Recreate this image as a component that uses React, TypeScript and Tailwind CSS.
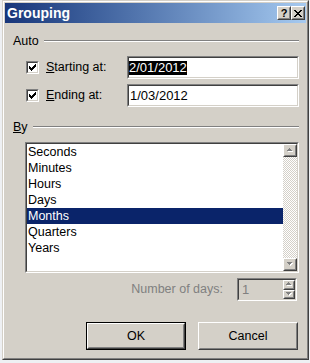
import React from "react"

const ITEMS = ["Seconds", "Minutes", "Hours", "Days", "Months", "Quarters", "Years"]

function Sunken({ className = "", inner = "bg-white", children }: { className?: string; inner?: string; children?: React.ReactNode }) {
  return (
    <div className={`border border-t-[#808080] border-l-[#808080] border-r-white border-b-white ${className}`}>
      <div className={`w-full h-full border border-t-[#404040] border-l-[#404040] border-r-[#d4d0c8] border-b-[#d4d0c8] ${inner}`}>
        {children}
      </div>
    </div>
  )
}

function Raised({ className = "", children }: { className?: string; children?: React.ReactNode }) {
  return (
    <div className={`bg-[#d4d0c8] border border-t-white border-l-white border-r-[#404040] border-b-[#404040] ${className}`}>
      <div className="w-full h-full border border-t-[#d4d0c8] border-l-[#d4d0c8] border-r-[#808080] border-b-[#808080] flex items-center justify-center">
        {children}
      </div>
    </div>
  )
}

function Check() {
  return (
    <Sunken className="w-[13px] h-[13px]">
      <div className="w-full h-full flex items-center justify-center">
        <svg width="7" height="7" viewBox="0 0 7 7" shapeRendering="crispEdges">
          <path d="M6 0h1v1h-1zM5 1h2v1h-2zM0 2h1v1h-1zM4 2h3v1h-3zM0 3h2v1h-2zM3 3h3v1h-3zM0 4h5v1h-5zM1 5h3v1h-3zM2 6h1v1h-1z" fill="#000" />
        </svg>
      </div>
    </Sunken>
  )
}

// greyed arrow, disabled look
function Arrow({ up }: { up?: boolean }) {
  return (
    <svg width="8" height="5" viewBox="0 0 8 5" shapeRendering="crispEdges">
      {up ? (
        <>
          <path d="M4 1h1v1h-1zM3 2h3v1h-3zM2 3h5v1h-5z" fill="#fff" />
          <path d="M3 0h1v1h-1zM2 1h3v1h-3zM1 2h5v1h-5z" fill="#808080" />
        </>
      ) : (
        <>
          <path d="M2 1h5v1h-5zM3 2h3v1h-3zM4 3h1v1h-1z" fill="#fff" />
          <path d="M1 0h5v1h-5zM2 1h3v1h-3zM3 2h1v1h-1z" fill="#808080" />
        </>
      )}
    </svg>
  )
}

function GroupLabel({ children, className = "" }: { children: React.ReactNode; className?: string }) {
  return (
    <div className={`flex items-center h-[14px] ${className}`}>
      <span>{children}</span>
      <div className="flex-1 ml-[5px] h-[2px] border-t border-b border-t-[#808080] border-b-white" />
    </div>
  )
}

export default function App() {
  return (
    <div className="w-[310px] h-[363px] bg-[#eef0f3] pl-[2px] overflow-hidden font-['Liberation_Sans',Arial,sans-serif] text-[12.5px] text-black leading-none">
      {/* window frame */}
      <div className="w-[307px] h-[360px] border border-t-[#d4d0c8] border-l-[#d4d0c8] border-r-[#404040] border-b-[#404040]">
        <div className="h-full border border-t-white border-l-white border-r-[#808080] border-b-[#808080] bg-[#d4d0c8] p-px flex flex-col">
          {/* title bar */}
          <div className="h-[20px] flex items-center pl-[2px] pr-[1px] bg-linear-to-r from-[#18367a] to-[#a6caf0]">
            <span className="text-white font-bold text-[14px]">Grouping</span>
            <div className="ml-auto flex">
              <Raised className="w-[14px] h-[14px]">
                <span className="font-bold text-[11px] leading-none">?</span>
              </Raised>
              <Raised className="w-[14px] h-[14px]">
                <svg width="8" height="7" viewBox="0 0 8 7" shapeRendering="crispEdges">
                  <path d="M0 0h2v1h-2zM6 0h2v1h-2zM1 1h2v1h-2zM5 1h2v1h-2zM2 2h4v1h-4zM3 3h2v1h-2zM2 4h4v1h-4zM1 5h2v1h-2zM5 5h2v1h-2zM0 6h2v1h-2zM6 6h2v1h-2z" fill="#000" />
                </svg>
              </Raised>
            </div>
          </div>

          {/* body */}
          <div className="flex-1 flex flex-col pl-[8px] pr-[7px]">
            <GroupLabel className="mt-[11px]">Auto</GroupLabel>

            <div className="flex items-center h-[23px] mt-[8px]">
              <div className="ml-[13px]"><Check /></div>
              <span className="ml-[7px]"><span className="underline">S</span>tarting at:</span>
              <Sunken className="ml-auto w-[172px] h-[23px]">
                <div className="h-full flex items-center text-[13px]">
                  <span className="bg-black text-white h-[14px] leading-[14px] px-0">2/01/2012</span>
                </div>
              </Sunken>
            </div>

            <div className="flex items-center h-[23px] mt-[5px]">
              <div className="ml-[13px]"><Check /></div>
              <span className="ml-[7px]"><span className="underline">E</span>nding at:</span>
              <Sunken className="ml-auto w-[172px] h-[23px]">
                <div className="h-full flex items-center text-[13px] pl-px">1/03/2012</div>
              </Sunken>
            </div>

            <GroupLabel className="mt-[13px]"><span className="underline">B</span>y</GroupLabel>

            <Sunken className="ml-[12px] mt-[8px] h-[131px]">
              <div className="flex h-full">
                <div className="flex-1 flex flex-col">
                  {ITEMS.map((item) => (
                    <div
                      key={item}
                      className={`h-[16px] leading-[16px] pl-px ${item === "Months" ? "bg-[#0a246a] text-white" : ""}`}
                    >
                      {item}
                    </div>
                  ))}
                </div>
                <div className="w-[14px] flex flex-col bg-[repeating-conic-gradient(#d4d0c8_0%_25%,#ffffff_0%_50%)] bg-[length:2px_2px]">
                  <Raised className="h-[13px]"><Arrow up /></Raised>
                  <div className="flex-1" />
                  <Raised className="h-[13px]"><Arrow /></Raised>
                </div>
              </div>
            </Sunken>

            <div className="flex items-center justify-end h-[23px] mt-[5px] pr-[2px]">
              <span className="text-[#808080] mr-[14px]">Number of days:</span>
              <Sunken className="w-[60px] h-[23px]" inner="bg-[#d4d0c8]">
                <div className="h-full flex">
                  <div className="flex-1 flex items-center pl-[3px] text-[#808080] text-[13px]">1</div>
                  <div className="w-[12px] flex flex-col">
                    <Raised className="flex-1"><Arrow up /></Raised>
                    <Raised className="flex-1"><Arrow /></Raised>
                  </div>
                </div>
              </Sunken>
            </div>

            <div className="flex justify-end gap-[12px] mt-[21px] pr-px">
              <div className="w-[100px] h-[28px] border border-black">
                <Raised className="w-full h-full">OK</Raised>
              </div>
              <Raised className="w-[100px] h-[28px]">Cancel</Raised>
            </div>
          </div>
        </div>
      </div>
    </div>
  )
}
